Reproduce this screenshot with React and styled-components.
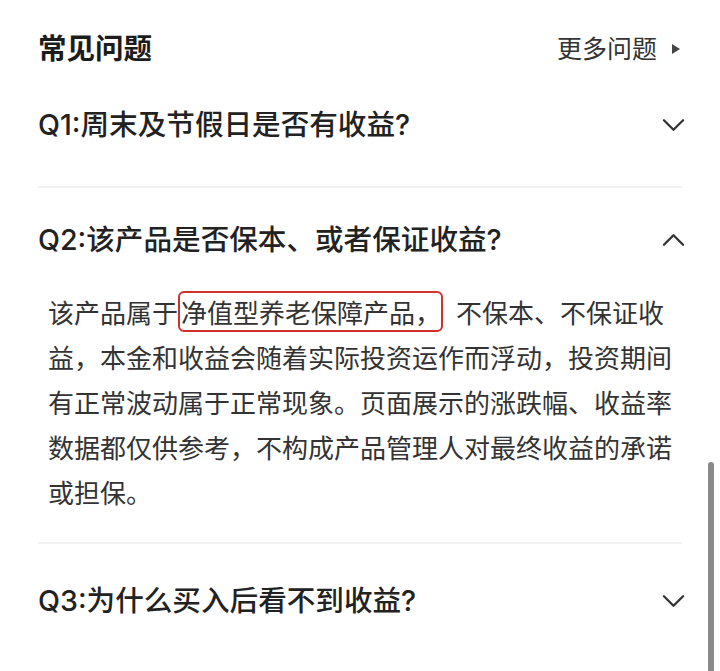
import styled, { createGlobalStyle } from "styled-components";

const GlobalStyle = createGlobalStyle`
    html, body {
        margin: 0;
        padding: 0;
        background: #ffffff;
    }

    body {
        font-family: Inter, "Noto Sans CJK SC", "Noto Sans", sans-serif;
        color: #222;
    }
`;

const faqs = [
    { id: 1, question: "Q1:周末及节假日是否有收益?", open: false },
    { id: 2, question: "Q2:该产品是否保本、或者保证收益?", open: true },
    { id: 3, question: "Q3:为什么买入后看不到收益?", open: false },
];

const Chevron = ({ up }) => (
    <ChevronIcon viewBox="0 0 24 14" up={up ? 1 : 0}>
        <polyline
            points="2,2 12,12 22,2"
            fill="none"
            stroke="#333"
            strokeWidth="2.4"
            strokeLinecap="round"
            strokeLinejoin="round"
        />
    </ChevronIcon>
);

const Answer = () => (
    <AnswerText>
        该产品属于<Mark>净值型养老保障产品，</Mark>不保本、不保证收益，本金和收益会随着实际投资运作而浮动，投资期间有正常波动属于正常现象。页面展示的涨跌幅、收益率数据都仅供参考，不构成产品管理人对最终收益的承诺或担保。
    </AnswerText>
);

const App = () => {
    return (
        <>
            <GlobalStyle />
            <Page>
                <Header>
                    <Title>常见问题</Title>
                    <More>
                        更多问题
                        <Triangle />
                    </More>
                </Header>

                {faqs.map((faq) => (
                    <Item key={faq.id} open={faq.open}>
                        <Question open={faq.open}>
                            <QuestionText>{faq.question}</QuestionText>
                            <Chevron up={faq.open} />
                        </Question>
                        {faq.open && <Answer />}
                    </Item>
                ))}
            </Page>
            <ScrollThumb />
        </>
    );
};

export default App;

const Page = styled.div`
    padding: 30px 38px 0;
    height: 671px;
    box-sizing: border-box;
    overflow: hidden;
`;

const Header = styled.div`
    display: flex;
    align-items: center;
    justify-content: space-between;
    height: 38px;
`;

const Title = styled.div`
    font-size: 28.5px;
    font-weight: 700;
    color: #1c1c1c;
    line-height: 38px;
`;

const More = styled.div`
    display: flex;
    align-items: center;
    gap: 15px;
    font-size: 25px;
    color: #333;
    line-height: 38px;
`;

const Triangle = styled.span`
    width: 0;
    height: 0;
    border-top: 5px solid transparent;
    border-bottom: 5px solid transparent;
    border-left: 8px solid #444;
    margin-right: 2px;
`;

const Item = styled.div`
    padding-bottom: ${props => props.open ? "28px" : "42px"};
    border-bottom: 2px solid #f1f1f1;

    &:last-child {
        border-bottom: none;
    }
`;

const Question = styled.div`
    display: flex;
    align-items: center;
    justify-content: space-between;
    padding-top: ${props => props.open ? "33px" : "38px"};
`;

const QuestionText = styled.div`
    font-size: 28.6px;
    font-weight: 500;
    line-height: 38px;
    color: #222;
`;

const ChevronIcon = styled.svg`
    width: 23px;
    height: 14px;
    margin-right: -3px;
    transform: ${props => props.up ? "rotate(180deg)" : "none"};
`;

const AnswerText = styled.p`
    margin: 30px 0 0;
    padding: 0 8px 0 10px;
    font-size: 26px;
    line-height: 45px;
    color: #333;
    font-family: "Noto Sans CJK SC", sans-serif;
`;

const Mark = styled.span`
    border: 2px solid #d2302c;
    border-radius: 6px;
    padding-left: 1px;
    margin-right: 13px;
`;

const ScrollThumb = styled.div`
    position: fixed;
    right: 6px;
    top: 462px;
    width: 6px;
    height: 240px;
    border-radius: 3px;
    background: #8a8a8a;
`;
